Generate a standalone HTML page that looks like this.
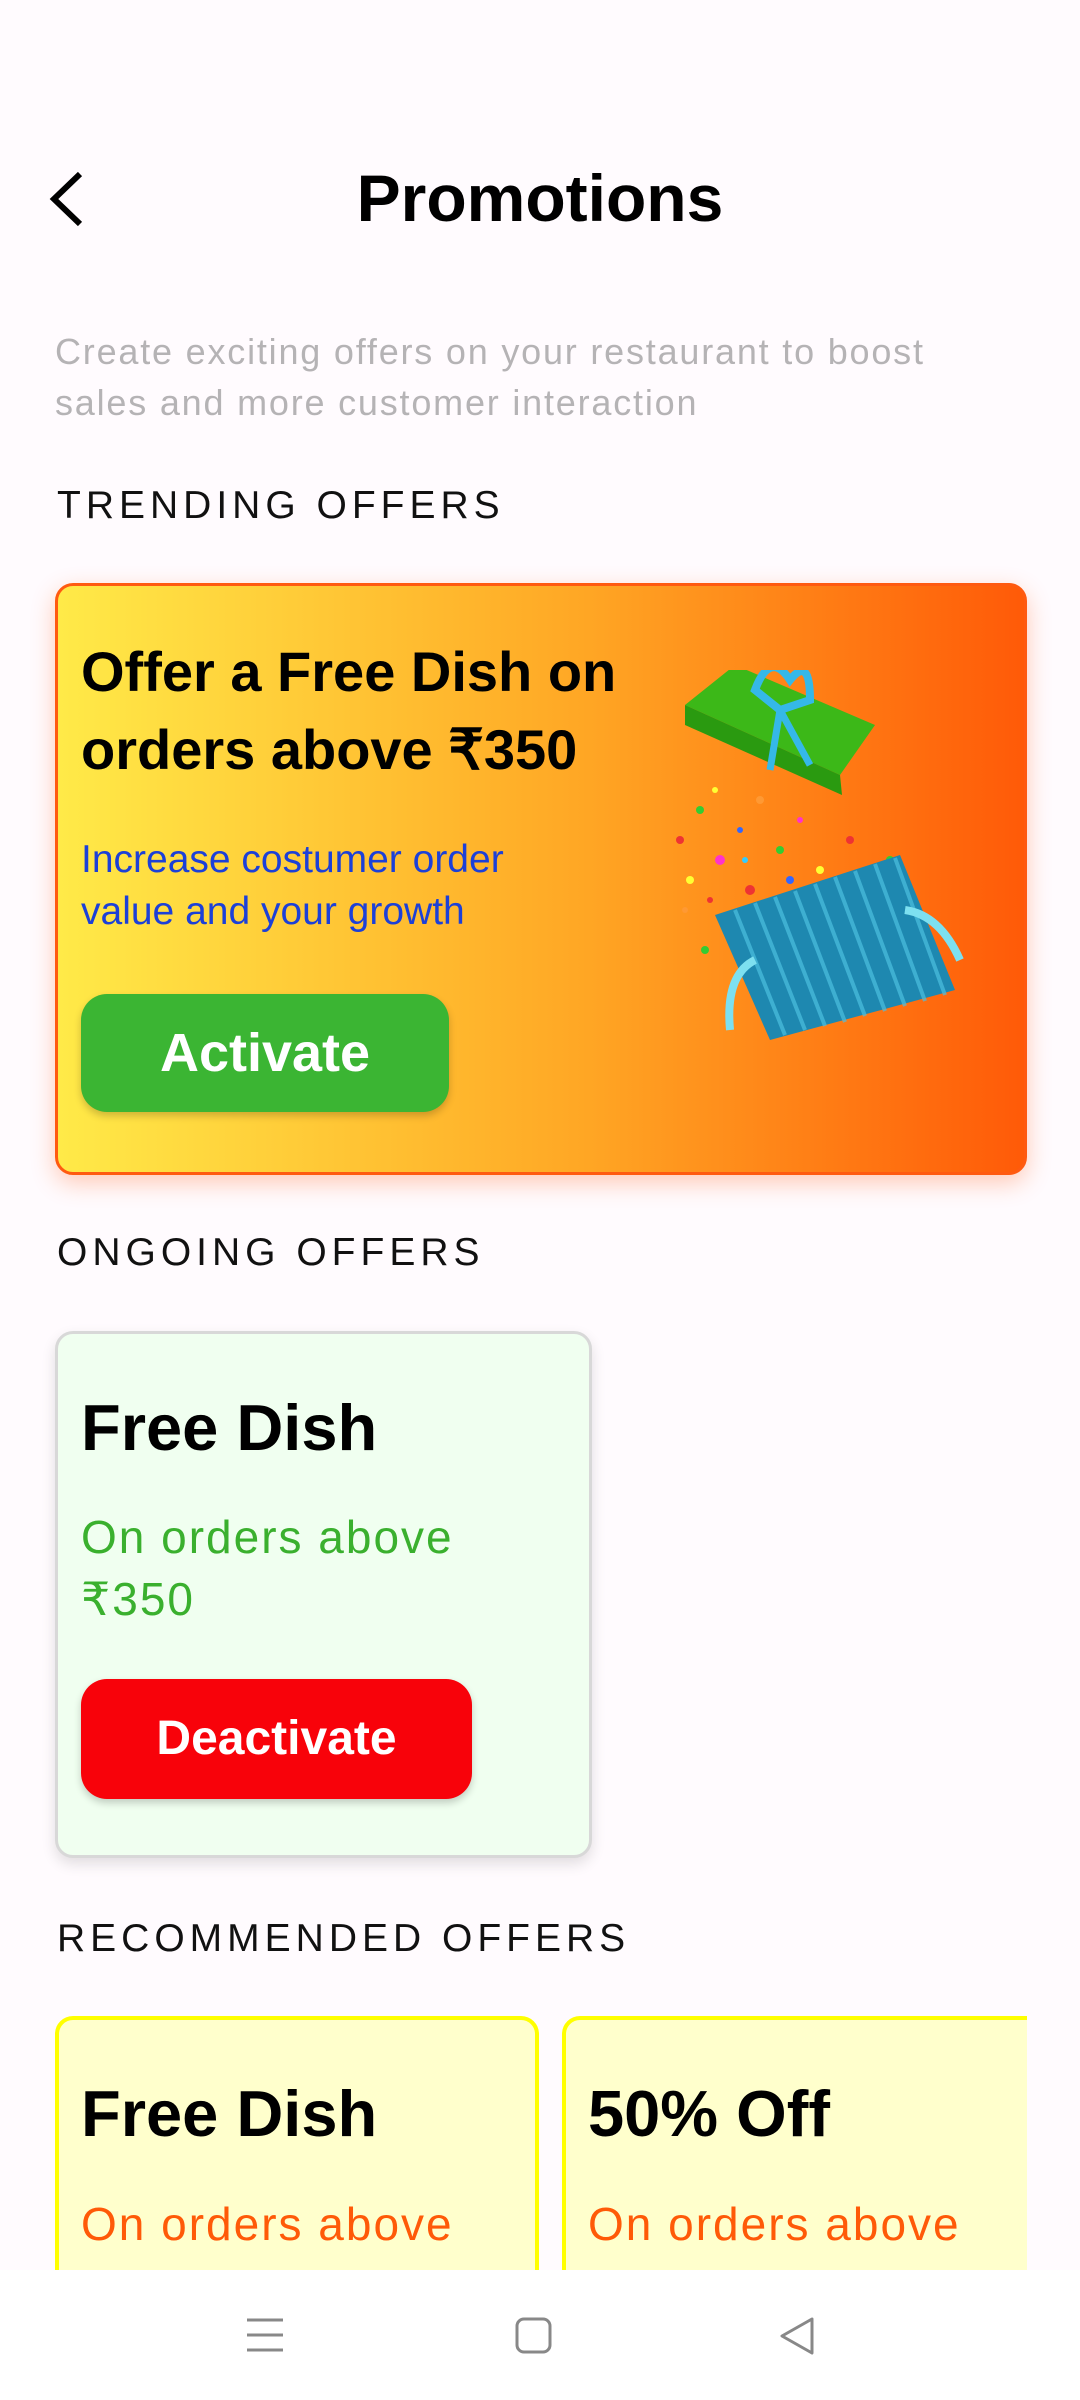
<!DOCTYPE html>
<html><head><meta charset="utf-8">
<style>
*{margin:0;padding:0;box-sizing:border-box}
body{width:1080px;height:2400px;background:#fffbfe;font-family:"Liberation Sans",sans-serif;position:relative;overflow:hidden;color:#000}
.a{position:absolute;white-space:nowrap}
.hdr{font-size:39px;letter-spacing:5px;color:#111;left:57px}
.card{position:absolute;border-radius:18px}
</style></head><body>
<svg class="a" style="left:46px;top:170px" width="40" height="58" viewBox="0 0 40 58"><path d="M34 4 L8 29 L34 54" fill="none" stroke="#000" stroke-width="6"/></svg>
<div class="a" style="left:0;width:1080px;text-align:center;top:158px;font-size:66px;font-weight:bold;line-height:80px">Promotions</div>
<div class="a" style="left:55px;top:326px;font-size:36px;letter-spacing:1.8px;line-height:51px;color:#b5b3b5">Create exciting offers on your restaurant to boost<br>sales and more customer interaction</div>
<div class="a hdr" style="top:484px">TRENDING OFFERS</div>

<div class="card" style="left:55px;top:583px;width:972px;height:592px;border:3px solid #ff5a10;background:linear-gradient(90deg,#ffea48,#ffa624 55%,#ff5a08);box-shadow:0 8px 24px rgba(255,90,16,0.3)"></div>
<div class="a" style="left:81px;top:633px;font-size:56px;font-weight:bold;line-height:78px">Offer a Free Dish on<br>orders above ₹350</div>
<div class="a" style="left:81px;top:834px;font-size:39px;line-height:52px;color:#1c40d8">Increase costumer order<br>value and your growth</div>
<div class="a" style="left:81px;top:994px;width:368px;height:118px;border-radius:26px;background:#3bb533;box-shadow:0 4px 8px rgba(0,0,0,0.2);color:#fff;font-size:54px;font-weight:bold;text-align:center;line-height:118px">Activate</div>
<svg class="a" style="left:660px;top:670px" width="320" height="380" viewBox="0 0 320 380">
<g>
<circle cx="20" cy="170" r="4" fill="#e33"/><circle cx="40" cy="140" r="4" fill="#3c3"/><circle cx="60" cy="190" r="5" fill="#f3c"/><circle cx="80" cy="160" r="3" fill="#36f"/><circle cx="30" cy="210" r="4" fill="#ff3"/><circle cx="100" cy="130" r="4" fill="#f93"/><circle cx="90" cy="220" r="5" fill="#e33"/><circle cx="120" cy="180" r="4" fill="#3c3"/><circle cx="70" cy="250" r="4" fill="#36f"/><circle cx="140" cy="150" r="3" fill="#f3c"/><circle cx="160" cy="200" r="4" fill="#ff3"/><circle cx="190" cy="170" r="4" fill="#e33"/><circle cx="210" cy="220" r="3" fill="#36f"/><circle cx="45" cy="280" r="4" fill="#3c3"/><circle cx="110" cy="260" r="6" fill="#f3c"/><circle cx="150" cy="240" r="4" fill="#ff3"/><circle cx="25" cy="240" r="3" fill="#f93"/><circle cx="230" cy="190" r="4" fill="#3c3"/>
<circle cx="55" cy="120" r="3" fill="#ff3"/><circle cx="130" cy="210" r="4" fill="#36f"/><circle cx="175" cy="230" r="5" fill="#3c3"/><circle cx="50" cy="230" r="3" fill="#e33"/><circle cx="200" cy="250" r="4" fill="#ff3"/><circle cx="85" cy="190" r="3" fill="#3cf"/>
</g>
<path d="M25 35 L75 -5 L215 55 L180 105 Z" fill="#3cb818"/>
<path d="M25 35 L180 105 L182 125 L25 55 Z" fill="#2a9a10"/>
<path d="M95 20 Q110 -20 130 10 Q150 -15 150 30 L120 40 Z" fill="none" stroke="#35b8e8" stroke-width="8"/>
<path d="M120 40 L110 100 M120 40 L150 95" stroke="#35b8e8" stroke-width="7"/>
<path d="M55 245 L240 185 L295 320 L110 370 Z" fill="#1e88b0"/>
<g stroke="#4cc0e0" stroke-width="4" opacity=".7"><path d="M75 240 L125 365 M95 233 L145 360 M115 227 L165 356 M135 221 L185 352 M155 214 L205 346 M175 207 L225 341 M195 201 L245 336 M215 194 L265 331 M235 188 L285 325"/></g>
<path d="M245 240 Q280 245 300 290 M95 290 Q65 305 70 360" fill="none" stroke="#7de0f0" stroke-width="8"/>
</svg>

<div class="a hdr" style="top:1231px">ONGOING OFFERS</div>
<div class="card" style="left:55px;top:1331px;width:537px;height:527px;border:3px solid #d8d8d8;background:#f0fff0;box-shadow:0 6px 14px rgba(0,0,0,0.12)"></div>
<div class="a" style="left:81px;top:1388px;font-size:65px;font-weight:bold;line-height:80px">Free Dish</div>
<div class="a" style="left:81px;top:1506px;font-size:46px;letter-spacing:2px;line-height:62px;color:#3ab02e">On orders above<br>₹350</div>
<div class="a" style="left:81px;top:1679px;width:391px;height:120px;border-radius:26px;background:#f8020a;box-shadow:0 4px 8px rgba(0,0,0,0.2);color:#fff;font-size:48px;font-weight:bold;text-align:center;line-height:120px">Deactivate</div>

<div class="a hdr" style="top:1917px;letter-spacing:5px">RECOMMENDED OFFERS</div>
<div class="card" style="left:55px;top:2016px;width:484px;height:300px;border:4px solid #ffff00;background:#ffffcc"></div>
<div class="card" style="left:562px;top:2016px;width:500px;height:300px;border:4px solid #ffff00;background:#ffffcc"></div>
<div class="a" style="left:1027px;top:2000px;width:60px;height:300px;background:#fffbfe"></div>
<div class="a" style="left:81px;top:2074px;font-size:65px;font-weight:bold;line-height:80px">Free Dish</div>
<div class="a" style="left:588px;top:2074px;font-size:65px;font-weight:bold;line-height:80px">50% Off</div>
<div class="a" style="left:81px;top:2193px;font-size:46px;letter-spacing:2px;line-height:62px;color:#ff5a08">On orders above</div>
<div class="a" style="left:588px;top:2193px;font-size:46px;letter-spacing:2px;line-height:62px;color:#ff5a08">On orders above</div>

<div class="a" style="left:0;top:2270px;width:1080px;height:130px;background:#fff"></div>
<svg class="a" style="left:245px;top:2315px" width="40" height="40" viewBox="0 0 40 40"><path d="M2 5H38M2 20H38M2 35H38" stroke="#888" stroke-width="3"/></svg>
<svg class="a" style="left:514px;top:2316px" width="40" height="40" viewBox="0 0 40 40"><rect x="3" y="3" width="33" height="33" rx="7" fill="none" stroke="#888" stroke-width="3"/></svg>
<svg class="a" style="left:778px;top:2316px" width="40" height="40" viewBox="0 0 40 40"><path d="M34 3 L4 20 L34 37 Z" fill="none" stroke="#888" stroke-width="3" stroke-linejoin="round"/></svg>
</body></html>
